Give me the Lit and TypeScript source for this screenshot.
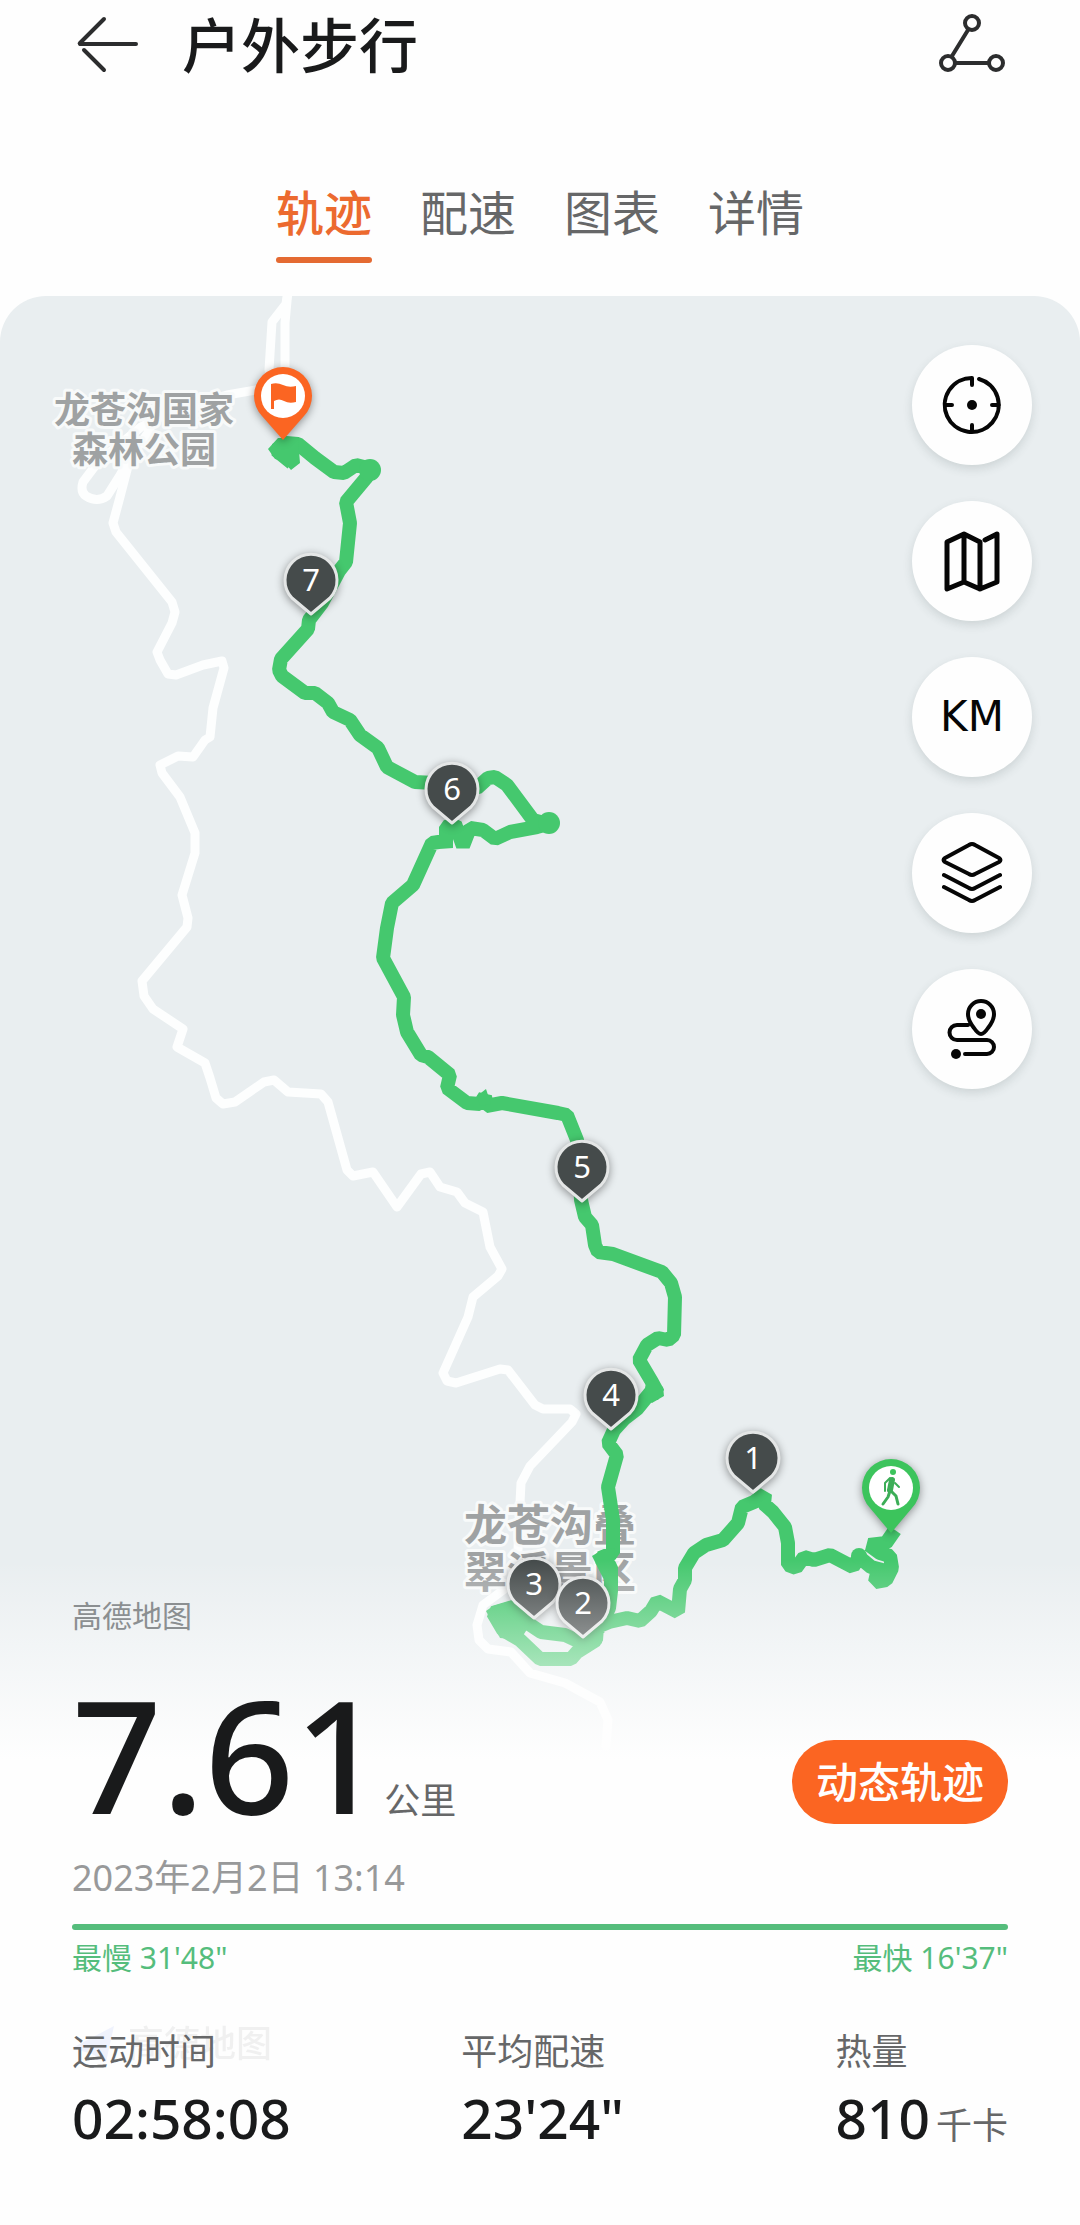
import { LitElement, html, svg, css } from "lit";
import { customElement, state } from "lit/decorators.js";
import { classMap } from "lit/directives/class-map.js";

const TABS = ["轨迹", "配速", "图表", "详情"];

const KILOMETRES = [
  { n: 7, x: 311, y: 580 },
  { n: 6, x: 452, y: 789 },
  { n: 5, x: 582, y: 1167 },
  { n: 4, x: 611, y: 1395 },
  { n: 1, x: 753, y: 1458 },
  { n: 3, x: 534, y: 1584 },
  { n: 2, x: 583, y: 1603 },
];

const ROADS = [
  "M288 290 L286 304 L272 322 L269 370",
  "M288 290 L285 323 L285 370",
  "M256 390 L227 395 L170 412 L141 427 L98 462 L83 482 Q80 492 86 496 Q97 503 107 496 L119 477 L130 458 L150 430",
  `M131 455 L128 466 L120 497 L113 523 L116 532 L172 602 L175 612 L172 623 L157 652 L160 660 L168 674
   L176 675 L203 665 L222 661 L224 668 L213 708 L210 737 L205 740 L193 757 L178 756 L160 765 L162 773
   L180 797 L195 833 L195 853 L182 895 L188 918 L187 927 L142 981 L144 996 L153 1009 L183 1029 L177 1047
   L205 1063 L210 1078 L216 1098 L223 1104 L235 1102 L264 1082 L274 1080 L288 1092 L321 1094 L328 1102
   L347 1170 L353 1176 L373 1172 L397 1207 L421 1174 L430 1172 L440 1187 L457 1192 L465 1203 L483 1212
   L490 1247 L502 1269 L498 1276 L473 1297 L468 1317 L443 1373 L447 1381 L456 1383 L500 1369 L508 1370
   L535 1405 L543 1409 L570 1409 L576 1414 L572 1422 L530 1466 L521 1483 L520 1503 L518 1550 L510 1585
   L483 1605 L477 1625 L479 1640 L488 1649 L511 1652 L530 1673 L565 1683 L600 1702 L608 1720 L606 1746`,
];

const ROUTE = `M895 1530 L886 1543 L869 1545 L880 1553 L890 1556 L892 1568 L886 1580 L875 1582 L877 1573 L886 1571
  L871 1567 L859 1557 L853 1567 L830 1555 L814 1560 L804 1557 L796 1568 L788 1565 L788 1543 L785 1527
  L773 1512 L764 1504 L765 1494 L754 1502 L742 1507 L738 1523 L723 1540 L706 1545 L694 1553 L685 1568
  L685 1580 L680 1589 L678 1612 L657 1601 L651 1611 L640 1621 L627 1618 L609 1622 L597 1627 L596 1640
  L577 1652 L571 1659 L540 1659 L520 1640 L503 1630 L493 1613 L513 1607 L523 1620 L541 1632 L565 1635
  L582 1643 L600 1627 L609 1608 L611 1591 L611 1567 L600 1558 L613 1553 L613 1520 L608 1487 L617 1455
  L608 1443 L614 1430 L624 1419 L637 1409 L650 1393 L658 1393 L652 1382 L639 1360 L647 1345 L658 1338
  L668 1340 L674 1335 L675 1297 L671 1283 L662 1272 L613 1254 L598 1252 L595 1245 L592 1225 L585 1217
  L581 1200 L579 1160 L577 1140 L567 1115 L558 1113 L502 1103 L486 1106 L485 1096 L480 1104 L467 1103
  L447 1088 L450 1075 L428 1057 L421 1055 L407 1032 L403 1015 L404 997 L383 958 L387 928 L392 903
  L413 885 L432 843 L445 841 L446 848 L446 827 L455 824 L463 846 L470 828 L483 830 L495 839 L510 832
  L537 827 L548 824 L533 820 L507 785 L495 777 L488 778 L477 788 L453 784 L415 782 L387 767 L378 748
  L360 735 L350 720 L333 712 L328 703 L315 693 L305 693 L282 676 L279 670 L281 659 L308 629 L309 620
  L322 603 L339 571 L346 562 L350 523 L346 502 L366 478 L372 469 L356 465 L344 473 L334 472 L315 458
  L298 444 L286 443 L276 450 L292 463`;

const pinPath = (r: number, tip: number) => {
  const dx = Math.round(r * 0.72);
  const dy = Math.round(r * 0.69);
  return `M0 ${tip} L${-dx} ${dy} A${r} ${r} 0 1 1 ${dx} ${dy} Z`;
};

const icon = (body: unknown) => html`
  <svg class="icon" viewBox="-32 -32 64 64" aria-hidden="true">${body}</svg>
`;

const CONTROLS = [
  {
    label: "定位",
    body: icon(svg`
      <path d="M7 -26 A27 27 0 1 1 0 -27 V-20 M0 27 V20 M-27 0 H-20 M27 0 H20" />
      <circle class="dot" r="5" />`),
  },
  {
    label: "地图",
    body: icon(svg`
      <path class="bold" d="M-25 -19 L-8 -27 L8 -19 V28 L-8 21 L-25 28 Z M-8 -27 V21 M8 28 L25 21 V-27 L13 -21" />`),
  },
  { label: "公里标记", body: html`<span class="km">KM</span>` },
  {
    label: "图层",
    body: icon(svg`
      <path d="M-3 -28 Q0 -30 3 -28 L27 -15 Q30 -13 27 -11 L3 1 Q0 3 -3 1 L-27 -11 Q-30 -13 -27 -15 Z
        M-28 2 L-3 15 Q0 17 3 15 L28 2 M-28 14 L-3 27 Q0 29 3 27 L28 14" />`),
  },
  {
    label: "路线",
    body: icon(svg`
      <path d="M9 5 Q6 5 2 -1 C-2 -6 -4 -10 -4 -15 A13 13 0 0 1 22 -15 C22 -10 20 -6 16 -1 Q12 5 9 5 Z
        M-4 -4 H-15 A7 7 0 0 0 -15 11 H15 A7 7 0 0 1 15 25 H-7" />
      <circle class="dot" cx="9" cy="-15" r="5" />
      <circle class="dot" cx="-16" cy="25" r="5" />`),
  },
];

@customElement("track-map")
class TrackMap extends LitElement {
  static styles = css`
    :host {
      display: block;
    }
    .map {
      display: block;
      width: 100%;
      height: 100%;
    }
    .road {
      fill: none;
      stroke: #fdfefe;
      stroke-width: 9;
      stroke-linejoin: round;
      stroke-linecap: round;
    }
    .route {
      fill: none;
      stroke: #45c86e;
      stroke-width: 14;
      stroke-linejoin: bevel;
    }
    .blob {
      fill: #45c86e;
    }
    .place {
      fill: #9fa2a3;
      stroke: #f8fafa;
      stroke-width: 6;
      stroke-linejoin: round;
      paint-order: stroke;
      font-family: "Noto Sans CJK SC", sans-serif;
      font-weight: 700;
      text-anchor: middle;
    }
    .park {
      font-size: 36px;
    }
    .scenic {
      font-size: 43px;
    }
    .shadow {
      filter: drop-shadow(0 2px 4px rgba(0, 0, 0, 0.4));
    }
    .marker {
      fill: #454b4b;
      stroke: #e4e6e6;
      stroke-width: 3;
      stroke-linejoin: round;
    }
    .number {
      fill: #fff;
      font: 400 31px "Noto Sans", sans-serif;
      text-anchor: middle;
    }
    .finish {
      fill: #fb6522;
    }
    .start {
      fill: #3cc45c;
    }
    .disc {
      fill: #fff;
    }
    .walker {
      fill: none;
      stroke: #3cae57;
      stroke-width: 2;
      stroke-linecap: round;
      stroke-linejoin: round;
    }
    .leg {
      stroke-width: 3;
    }
    .torso {
      stroke-width: 6;
    }
  `;

  render() {
    return html`
      <svg class="map" viewBox="0 296 1080 1929" preserveAspectRatio="xMidYMin slice" role="img" aria-label="轨迹地图">
        ${ROADS.map((d) => svg`<path class="road" d=${d} />`)}
        <text class="place park" x="144" y="423">龙苍沟国家</text>
        <text class="place park" x="144" y="463">森林公园</text>
        <text class="place scenic" x="550" y="1541">龙苍沟叠</text>
        <text class="place scenic" x="550" y="1588">翠溪景区</text>
        <path class="route" d=${ROUTE} />
        <path class="blob" d="M268 449 L278 438 L298 438 L300 463 L291 470 L283 461 L275 459 Z" />
        <circle class="blob" cx="370" cy="470" r="11" />
        <circle class="blob" cx="549" cy="823" r="11" />
        <circle class="blob" cx="859" cy="1556" r="8" />
        <path class="blob" d="M647 1378 L663 1387 L664 1396 L652 1403 L643 1398 Z" />
        <path class="blob" d="M486 1611 L493 1606 L514 1600 L532 1622 L520 1640 L500 1638 Z" />
        <path class="blob" d="M592 1556 L602 1550 L614 1548 L616 1590 L604 1580 Z" />
        <path class="blob" d="M577 1643 L601 1624 L602 1643 L588 1653 Z" />
        <path class="blob" d="M477 1096 L486 1089 L491 1104 L480 1106 Z" />
        ${KILOMETRES.map(
          (k) => svg`
            <g transform="translate(${k.x} ${k.y})">
              <path class="marker shadow" d=${pinPath(26, 34)} />
              <text class="number" y="11">${k.n}</text>
            </g>`
        )}
        <g transform="translate(283 396)">
          <path class="finish shadow" d=${pinPath(29, 44)} />
          <circle class="disc" r="22" />
          <path class="finish" d="M-12 -12 Q-6 -14 0 -11 T13 -10 V6 Q6 8 1 5 T-9 5 V13 H-12 Z" />
        </g>
        <g transform="translate(891 1488)">
          <path class="start shadow" d=${pinPath(29, 45)} />
          <circle class="disc" r="22" />
          <circle class="start" cx="2" cy="-16" r="3" />
          <path class="walker torso" d="M1 -8 L-1 2" />
          <path class="walker" d="M-1 -10 L-6 -5 L-6 3 M4 -5 L8 -1" />
          <path class="walker leg" d="M-1 3 L-3 9 L-8 16 M0 3 L5 8 L7 16" />
        </g>
      </svg>
    `;
  }
}

@customElement("app-root")
class AppRoot extends LitElement {
  static styles = css`
    :host {
      display: flex;
      flex-direction: column;
      min-height: 100vh;
      background: #fefefe;
      color: #191a1b;
      font-family: "Noto Sans", "Noto Sans CJK SC", sans-serif;
    }
    * {
      box-sizing: border-box;
    }
    button {
      border: 0;
      padding: 0;
      background: none;
      color: inherit;
      font: inherit;
      cursor: pointer;
    }
    h1,
    p,
    dl,
    dd {
      margin: 0;
    }
    .header {
      display: flex;
      align-items: center;
      gap: 40px;
      height: 90px;
      padding: 0 72px;
    }
    .title {
      flex: 1;
      font-size: 59px;
      line-height: 88px;
      font-weight: 500;
    }
    .head-icon {
      display: block;
      width: 70px;
      height: 64px;
      fill: none;
      stroke: #2c2d2e;
      stroke-width: 4;
      stroke-linecap: round;
      stroke-linejoin: round;
    }
    .tabs {
      display: flex;
      justify-content: center;
      gap: 48px;
      padding: 91px 0 33px;
    }
    .tab {
      display: flex;
      flex-direction: column;
      gap: 12px;
      color: #666768;
      font-size: 48px;
      line-height: 64px;
    }
    .tab::after {
      content: "";
      width: 100%;
      height: 6px;
      border-radius: 3px;
    }
    .tab.active {
      color: #ec6a2f;
      font-weight: 500;
    }
    .tab.active::after {
      background: #e46a32;
    }
    .stage {
      position: relative;
      flex: 1;
      display: flex;
      flex-direction: column;
      overflow: hidden;
      border-radius: 46px 46px 0 0;
      background: #e9eef0;
    }
    .backdrop {
      position: absolute;
      inset: 0;
    }
    .controls {
      position: relative;
      display: flex;
      flex-direction: column;
      align-items: flex-end;
      gap: 36px;
      padding: 49px 48px;
    }
    .control {
      display: grid;
      place-items: center;
      width: 120px;
      height: 120px;
      border-radius: 50%;
      background: #fefefe;
      color: #060606;
      box-shadow: 0 4px 10px rgba(60, 80, 80, 0.16);
    }
    .icon {
      width: 64px;
      height: 64px;
      fill: none;
      stroke: currentColor;
      stroke-width: 4;
      stroke-linecap: round;
      stroke-linejoin: round;
    }
    .bold {
      stroke-width: 5;
    }
    .dot {
      fill: currentColor;
      stroke: none;
    }
    .km {
      font: 400 42px/48px "DejaVu Sans", sans-serif;
    }
    .summary {
      position: relative;
      margin-top: auto;
      padding: 36px 72px 75px;
      background: linear-gradient(rgba(254, 254, 254, 0), rgba(254, 254, 254, 0.5) 100px, #fefefe 200px);
    }
    .source {
      color: #8b8f91;
      font-size: 30px;
      line-height: 40px;
    }
    .hero {
      display: flex;
      align-items: flex-end;
      justify-content: space-between;
      margin-top: 37px;
    }
    .distance {
      display: flex;
      align-items: baseline;
    }
    .total {
      font-size: 157px;
      font-weight: 500;
      line-height: 160px;
    }
    .unit {
      color: #666768;
      font-size: 36px;
      font-weight: 400;
      line-height: 48px;
    }
    .replay {
      margin-bottom: 9px;
      padding: 0 24px;
      border-radius: 42px;
      background: #fb6522;
      color: #fff;
      font-size: 42px;
      font-weight: 500;
      line-height: 84px;
    }
    .date {
      margin-top: 21px;
      color: #98999a;
      font-size: 36px;
      line-height: 48px;
    }
    .pace-bar {
      height: 6px;
      margin-top: 22px;
      border-radius: 3px;
      background: #55bd7c;
    }
    .pace {
      display: flex;
      justify-content: space-between;
      margin-top: 10px;
      color: #55bd7c;
      font-size: 30px;
      line-height: 36px;
    }
    .metrics {
      position: relative;
      display: grid;
      grid-template-columns: 26fr 25fr auto;
      margin-top: 52px;
    }
    .metric {
      position: relative;
      display: flex;
      flex-direction: column;
      gap: 10px;
    }
    .label {
      color: #666768;
      font-size: 36px;
      line-height: 48px;
    }
    .value {
      display: flex;
      align-items: baseline;
      gap: 6px;
      font-size: 55px;
      font-weight: 500;
      line-height: 64px;
    }
    .watermark {
      position: absolute;
      top: -8px;
      left: 0;
      display: flex;
      align-items: center;
      gap: 4px;
      opacity: 0.08;
      color: #55585a;
      font-size: 36px;
      font-weight: 500;
      line-height: 48px;
    }
    .plane {
      width: 52px;
      height: 40px;
      fill: #4a6cf0;
    }
  `;

  @state() private tab = TABS[0];

  render() {
    return html`
      <header class="header">
        <button aria-label="返回">
          <svg class="head-icon" viewBox="72 13 70 64" aria-hidden="true">
            <path d="M104 19 L80 43 Q79 44 81 44 H136 M84 50 L104 70" />
          </svg>
        </button>
        <h1 class="title">户外步行</h1>
        <button aria-label="分享">
          <svg class="head-icon" viewBox="938 13 70 64" aria-hidden="true">
            <circle cx="972" cy="23" r="7" />
            <circle cx="948" cy="63" r="7" />
            <circle cx="996" cy="63" r="7" />
            <path d="M968 30 L952 56 M956 63 H988" />
          </svg>
        </button>
      </header>
      <nav class="tabs" role="tablist">
        ${TABS.map(
          (name) => html`
            <button
              role="tab"
              class=${classMap({ tab: true, active: name === this.tab })}
              aria-selected=${name === this.tab ? "true" : "false"}
              @click=${() => (this.tab = name)}
            >${name}</button>
          `
        )}
      </nav>
      <main class="stage">
        <track-map class="backdrop"></track-map>
        <div class="controls">
          ${CONTROLS.map((c) => html`<button class="control" aria-label=${c.label}>${c.body}</button>`)}
        </div>
        <section class="summary">
          <p class="source">高德地图</p>
          <div class="hero">
            <p class="distance"><span class="total">7.61</span><span class="unit">公里</span></p>
            <button class="replay">动态轨迹</button>
          </div>
          <p class="date">2023年2月2日 13:14</p>
          <div class="pace-bar"></div>
          <div class="pace"><span>最慢 31'48"</span><span>最快 16'37"</span></div>
          <dl class="metrics">
            <div class="watermark" aria-hidden="true">
              <svg class="plane" viewBox="0 0 52 40"><path d="M0 24 L42 2 L34 38 L20 30 Z" /></svg>
              <span>高德地图</span>
            </div>
            <div class="metric">
              <dt class="label">运动时间</dt>
              <dd class="value">02:58:08</dd>
            </div>
            <div class="metric">
              <dt class="label">平均配速</dt>
              <dd class="value">23'24"</dd>
            </div>
            <div class="metric">
              <dt class="label">热量</dt>
              <dd class="value">810<span class="unit">千卡</span></dd>
            </div>
          </dl>
        </section>
      </main>
    `;
  }
}
